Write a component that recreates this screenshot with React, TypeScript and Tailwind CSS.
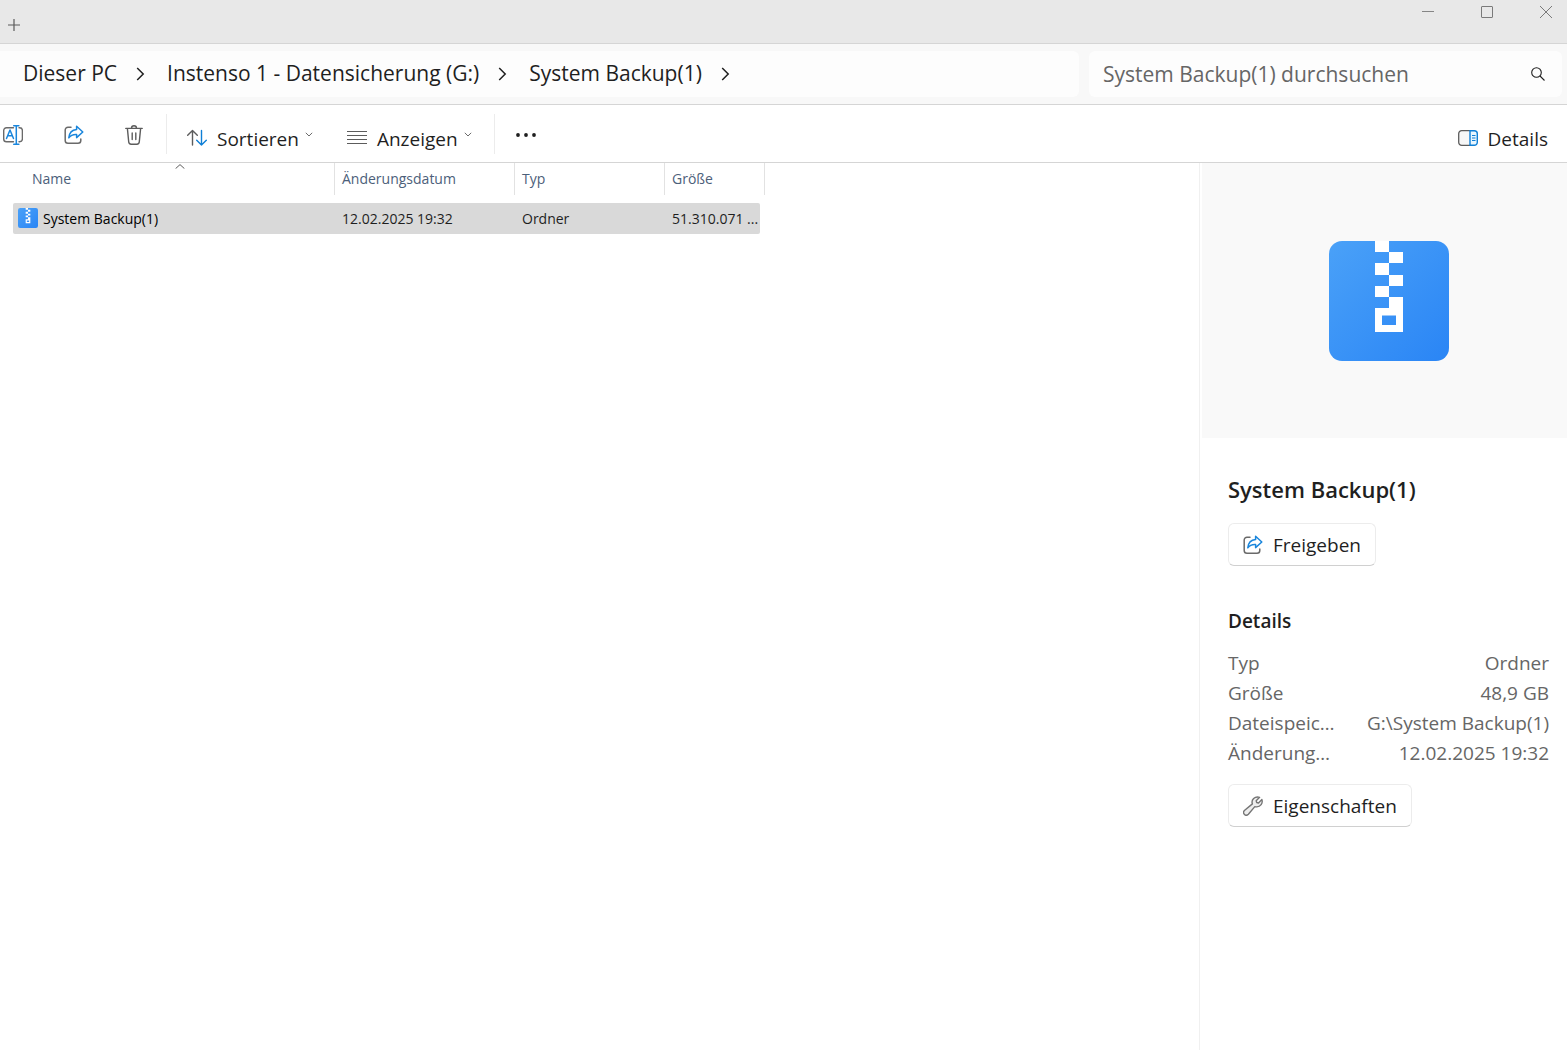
import React from 'react';

function ShareIcon() {
  return (
    <svg width="20" height="20" viewBox="0 0 20 20" fill="none" strokeLinecap="round" strokeLinejoin="round">
      <path d="M7 2.2H4A2.8 2.8 0 0 0 1.2 5v10.5A2.8 2.8 0 0 0 4 18.3h10a2.8 2.8 0 0 0 2.8-2.8V14" stroke="#6a6a6a" strokeWidth="1.500" />
      <path d="M12.600 1.200 18.800 7l-6.200 5.600V9.400C9 9.200 6.500 10.300 4.800 12.800 5.200 8.400 8 4.900 12.600 4.500Z" stroke="#1a86dc" strokeWidth="1.500" />
    </svg>
  );
}

function RenameIcon() {
  return (
    <svg width="20" height="20" viewBox="0 0 20 20" fill="none" strokeLinecap="round" strokeLinejoin="round">
      <path d="M10.500 2.700H3.500A2.800 2.800 0 0 0 .700 5.500v8.500a2.800 2.800 0 0 0 2.800 2.800h7M16 2.700h.600a2.800 2.800 0 0 1 2.800 2.800v8.500a2.800 2.800 0 0 1-2.800 2.800H16" stroke="#6a6a6a" strokeWidth="1.400" />
      <path d="m3.500 13.500 3.500-8.500 3.500 8.500M4.700 10.800h4.600M13.300.700v18.600M10.800.700h5M10.800 19.300h5" stroke="#1a86dc" strokeWidth="1.500" />
    </svg>
  );
}

function TrashIcon() {
  return (
    <svg width="18" height="20" viewBox="0 0 18 20" fill="none" stroke="#5c5c5c" strokeWidth="1.400" strokeLinecap="round" strokeLinejoin="round">
      <path d="M.8 3.400h16.400M6.500 3.200a2.500 2.500 0 0 1 5 0M2.400 3.600l1.300 13.200A2.500 2.500 0 0 0 6.200 19.200h5.600a2.500 2.500 0 0 0 2.500-2.400L15.600 3.600M7.200 8v6.500M10.800 8v6.500" />
    </svg>
  );
}

function SortIcon() {
  return (
    <svg width="20" height="18" viewBox="0 0 20 18" fill="none" strokeWidth="1.400" strokeLinecap="round" strokeLinejoin="round">
      <path d="M5.500 16V1.500M.700 6.300l4.800-4.800 4.800 4.800" stroke="#5c5c5c" />
      <path d="M14.500 1.500V16M9.700 11.200l4.800 4.800 4.800-4.800" stroke="#0f7fd6" />
    </svg>
  );
}

function LinesIcon() {
  return (
    <svg width="20" height="14" viewBox="0 0 20 14" fill="none" stroke="#5c5c5c">
      <path d="M0 .5h20M0 4.500h20M0 8.500h20M0 12.500h20" />
    </svg>
  );
}

function PaneIcon() {
  return (
    <svg width="20" height="16" viewBox="0 0 20 16" fill="none">
      <path d="M12 .7H3.700a3 3 0 0 0-3 3v8.600a3 3 0 0 0 3 3H12" fill="#f7f7f7" stroke="#5c5c5c" strokeWidth="1.300" />
      <path d="M12 .7h4.300a3 3 0 0 1 3 3v8.600a3 3 0 0 1-3 3H12Z" fill="#e8f6ff" stroke="#0f7fd6" strokeWidth="1.400" />
      <path d="M14 5.500h3.500M14 8h3.500M14 10.500h3.500" stroke="#0f7fd6" strokeWidth="1.200" />
    </svg>
  );
}

function WrenchIcon() {
  return (
    <svg width="20" height="20" viewBox="0 0 20 20" fill="#ededed" stroke="#757575" strokeWidth="1.400" strokeLinejoin="round">
      <path d="M16.600 1.300 13.200 4.700l.5 1.800 1.800.5 3.400-3.400c1.200 3.800-1.500 7.400-5.200 7.300-.7 0-1.300-.1-1.900-.3L5.400 18.300a2.700 2.700 0 0 1-4-3.800l8-6.600C7.900 3.900 11.800-.100 16.600 1.300Z" />
    </svg>
  );
}

function ChevronDown() {
  return (
    <svg width="8" height="5" viewBox="0 0 8 5" fill="none" stroke="#6b6b6b">
      <path d="M.8.800 4 4 7.200.800" />
    </svg>
  );
}

function ChevronRight() {
  return (
    <svg width="9" height="14" viewBox="0 0 9 14" fill="none" stroke="#1f1f1f" strokeWidth="1.500">
      <path d="m1.200 1 6 6-6 6" />
    </svg>
  );
}

function ZipIcon({ size, id }: { size: number; id: string }) {
  return (
    <svg width={size} height={size} viewBox="0 0 120 120">
      <defs>
        <linearGradient id={id} x1="0" y1="0" x2="1" y2="1">
          <stop offset="0" stopColor="#4aa1f8" />
          <stop offset="1" stopColor="#2a85f5" />
        </linearGradient>
      </defs>
      <rect width="120" height="120" rx="13" fill={`url(#${id})`} />
      <path
        fill="#fff"
        fillRule="evenodd"
        d="M46 0h14v11H46ZM60 11h14v11H60ZM46 22h14v12H46ZM60 34h14v11H60ZM46 45h14v11H46ZM60 56h14v35H46V67h14ZM53 74.500v9.500h14v-9.500Z"
      />
    </svg>
  );
}

const crumbs = ['Dieser PC', 'Instenso 1 - Datensicherung (G:)', 'System Backup(1)'];

const details = [
  ['Typ', 'Ordner'],
  ['Größe', '48,9 GB'],
  ['Dateispeic…', 'G:\\System Backup(1)'],
  ['Änderung…', '12.02.2025 19:32'],
];

function TitleBar() {
  return (
    <header className="flex h-11 items-start justify-between border-b border-[#d5d5d5] bg-[#e8e8e8] pl-2 pr-[15px]">
      <button aria-label="Neuer Tab" className="mt-[19px]">
        <svg width="12" height="12" viewBox="0 0 12 12" stroke="#5a5a5a" strokeWidth="1.200">
          <path d="M6 0v12M0 6h12" />
        </svg>
      </button>
      <div className="mt-[6px] flex gap-[47px]">
        <button aria-label="Minimieren">
          <svg width="12" height="12" viewBox="0 0 12 12" stroke="#858585">
            <path d="M0 5.500h12" />
          </svg>
        </button>
        <button aria-label="Maximieren">
          <svg width="12" height="12" viewBox="0 0 12 12" fill="none" stroke="#7a7a7a">
            <rect x=".5" y=".5" width="11" height="11" rx=".5" />
          </svg>
        </button>
        <button aria-label="Schließen">
          <svg width="12" height="12" viewBox="0 0 12 12" stroke="#7a7a7a">
            <path d="m0 0 12 12M12 0 0 12" />
          </svg>
        </button>
      </div>
    </header>
  );
}

function AddressBar() {
  return (
    <div className="flex h-[61px] gap-[10px] border-b border-[#d5d5d5] bg-[#f8f8f8] py-[7px] pr-[5px]">
      <nav aria-label="Pfad" className="flex flex-1 items-center rounded-r-md bg-[#fdfdfd] pl-[23px] text-[21px] text-[#1f1f1f]">
        {crumbs.map((crumb) => (
          <React.Fragment key={crumb}>
            <a href="#" className="whitespace-nowrap">{crumb}</a>
            <span className="ml-[19px] mr-[22px]">
              <ChevronRight />
            </span>
          </React.Fragment>
        ))}
      </nav>
      <form className="flex w-[473px] items-center rounded-md bg-[#fdfdfd] pl-[14px] pr-[17px]">
        <input
          type="search"
          aria-label="System Backup(1) durchsuchen"
          placeholder="System Backup(1) durchsuchen"
          className="min-w-0 flex-1 bg-transparent pt-[2px] text-[21px] outline-none placeholder:text-[#666666]"
        />
        <button type="button" aria-label="Suchen">
          <svg width="14" height="14" viewBox="0 0 14 14" fill="none" stroke="#1f1f1f" strokeWidth="1.100">
            <circle cx="5.500" cy="5.500" r="4.800" />
            <path d="m9 9 4.500 4.500" />
          </svg>
        </button>
      </form>
    </div>
  );
}

function Toolbar() {
  return (
    <div className="flex h-[58px] items-center border-b border-[#d5d5d5] bg-white pl-[3px] pr-[19px] text-[19px] text-[#1f1f1f]">
      <div className="flex items-center gap-[41px] pt-[3px]">
        <button aria-label="Umbenennen"><RenameIcon /></button>
        <button aria-label="Freigeben"><ShareIcon /></button>
        <button aria-label="Löschen"><TrashIcon /></button>
      </div>
      <div className="ml-[23px] h-10 w-px bg-[#ececec]" />
      <button className="ml-5 flex items-center pt-[9px]">
        <SortIcon />
        <span className="ml-[10px] mr-[6px] pt-[3px]">Sortieren</span>
        <span className="pb-2"><ChevronDown /></span>
      </button>
      <button className="ml-[34px] flex items-center pt-[9px]">
        <LinesIcon />
        <span className="ml-[10px] mr-[6px] pt-[3px]">Anzeigen</span>
        <span className="pb-2"><ChevronDown /></span>
      </button>
      <div className="ml-[22px] h-10 w-px bg-[#ececec]" />
      <button aria-label="Mehr anzeigen" className="ml-5 pt-[3px]">
        <svg width="22" height="4" viewBox="0 0 22 4" fill="#1f1f1f">
          <circle cx="3" cy="2" r="1.900" />
          <circle cx="11" cy="2" r="1.900" />
          <circle cx="19" cy="2" r="1.900" />
        </svg>
      </button>
      <button className="ml-auto flex items-center gap-[10px] pt-[9px]">
        <PaneIcon />
        <span className="pt-[3px]">Details</span>
      </button>
    </div>
  );
}

function FileList() {
  return (
    <main className="min-w-0 flex-1 pl-[13px]">
      <table className="w-[752px] table-fixed border-separate border-spacing-0 text-left text-sm">
        <colgroup>
          <col className="w-[322px]" />
          <col className="w-[180px]" />
          <col className="w-[150px]" />
          <col className="w-[100px]" />
        </colgroup>
        <thead className="text-[#4c607a]">
          <tr className="h-8">
            <th className="relative border-r border-[#e2e2e2] pl-[19px] font-normal">
              Name
              <span className="absolute inset-x-0 top-px flex justify-center pl-3">
                <svg width="10" height="5" viewBox="0 0 10 5" fill="none" stroke="#5c5c5c">
                  <path d="M.6 4.600 5 .6l4.400 4" />
                </svg>
              </span>
            </th>
            <th className="border-r border-[#e2e2e2] pl-[7px] font-normal">Änderungsdatum</th>
            <th className="border-r border-[#e2e2e2] pl-[7px] font-normal">Typ</th>
            <th className="border-r border-[#e2e2e2] pl-[7px] font-normal">Größe</th>
          </tr>
        </thead>
        <tbody className="text-[#1f1f1f]">
          <tr>
            <td className="pt-2">
              <div className="flex h-[31px] items-start gap-[5px] rounded-l-xs bg-[#d9d9d9] pl-[5px] pt-[5px] text-black">
                <ZipIcon size={20} id="zip-small" />
                <span className="pt-px">System Backup(1)</span>
              </div>
            </td>
            <td className="pt-2">
              <div className="h-[31px] bg-[#d9d9d9] pl-[7px] pt-[6px]">12.02.2025 19:32</div>
            </td>
            <td className="pt-2">
              <div className="h-[31px] bg-[#d9d9d9] pl-[7px] pt-[6px]">Ordner</div>
            </td>
            <td className="pt-2">
              <div className="mr-[5px] h-[31px] whitespace-nowrap rounded-r-xs bg-[#d9d9d9] pl-[7px] pt-[6px]">51.310.071 ...</div>
            </td>
          </tr>
        </tbody>
      </table>
    </main>
  );
}

function DetailsPane() {
  return (
    <aside className="w-[368px] border-l border-[#f0f0f0] pl-[2px] text-[19px] text-[#1f1f1f]">
      <div className="flex h-[275px] items-center justify-center bg-[#f9f9f9] pl-2">
        <ZipIcon size={120} id="zip-large" />
      </div>
      <div className="pl-[26px] pr-[18px] pt-9">
        <h1 className="text-[22px] leading-[30px] font-semibold">System Backup(1)</h1>
        <button className="mt-[19px] flex h-[43px] items-center gap-[10px] rounded-md border border-[#ececec] border-b-[#d0d0d0] px-[14px]">
          <ShareIcon />
          <span className="pt-[2px]">Freigeben</span>
        </button>
        <h2 className="mt-10 leading-[30px] font-semibold">Details</h2>
        <dl className="mt-3 leading-[30px] text-[#666666]">
          {details.map(([label, value]) => (
            <div key={label} className="flex justify-between">
              <dt className="whitespace-nowrap">{label}</dt>
              <dd className="whitespace-nowrap">{value}</dd>
            </div>
          ))}
        </dl>
        <button className="mt-4 flex h-[43px] items-center gap-[10px] rounded-md border border-[#ececec] border-b-[#d0d0d0] px-[14px]">
          <WrenchIcon />
          <span className="pt-[2px]">Eigenschaften</span>
        </button>
      </div>
    </aside>
  );
}

export default function App() {
  return (
    <div className="flex min-h-screen flex-col bg-white font-['Open_Sans',sans-serif]">
      <TitleBar />
      <AddressBar />
      <Toolbar />
      <div className="flex flex-1">
        <FileList />
        <DetailsPane />
      </div>
    </div>
  );
}
